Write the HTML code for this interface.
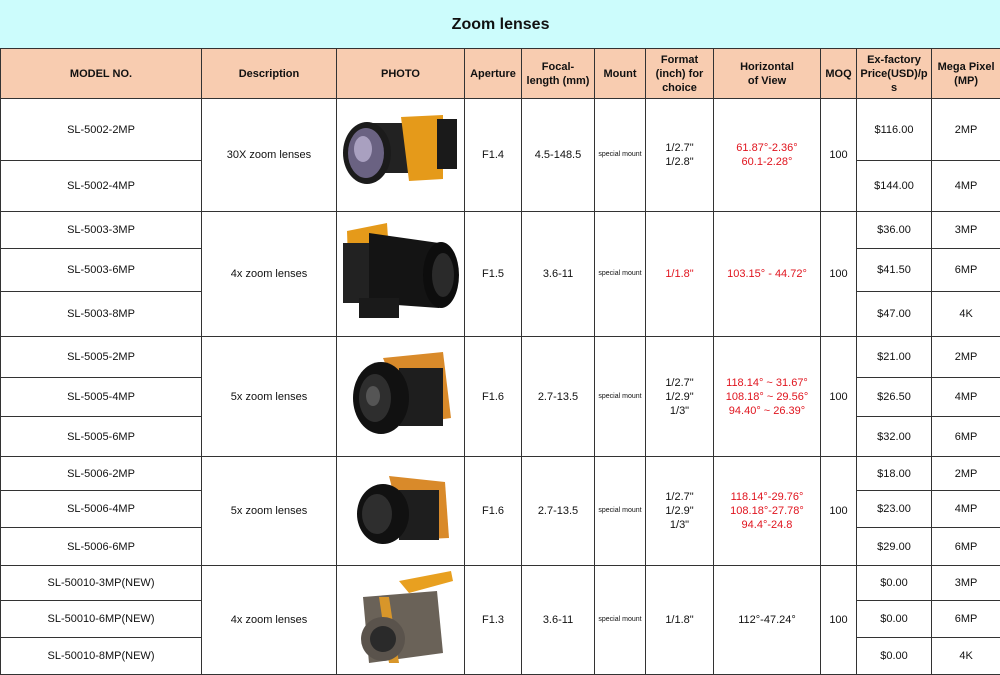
<!DOCTYPE html>
<html><head><meta charset="utf-8"><style>
body{margin:0;background:#fff;font-family:"Liberation Sans",Arial,sans-serif;}
table{border-collapse:collapse;table-layout:fixed;width:1000px;position:absolute;top:0;left:0}
td{border:1px solid #333;text-align:center;vertical-align:middle;font-size:11px;color:#111;padding:0;overflow:hidden;line-height:14px}
.t{background:#ccfcfc;font-weight:bold;font-size:16px;height:47px;border-top:1px solid #ccfcfc;border-left-color:#ccfcfc}
.h td{background:#f8ccb0;font-weight:bold;font-size:11px;height:49px}
.r{color:#e0141e}
.s{font-size:7px}
svg{display:block;margin:auto}
</style></head><body>
<table>
<colgroup><col style="width:201px"><col style="width:135px"><col style="width:128px"><col style="width:57px"><col style="width:73px"><col style="width:51px"><col style="width:68px"><col style="width:107px"><col style="width:36px"><col style="width:75px"><col style="width:69px"></colgroup>
<tr><td class="t" colspan="11">Zoom lenses</td></tr>
<tr class="h"><td>MODEL NO.</td><td>Description</td><td>PHOTO</td><td>Aperture</td><td>Focal-<br>length (mm)</td><td>Mount</td><td>Format<br>(inch) for<br>choice</td><td>Horizontal<br>of View</td><td>MOQ</td><td>Ex-factory<br>Price(USD)/p<br>s</td><td>Mega Pixel<br>(MP)</td></tr>

<tr style="height:62px"><td>SL-5002-2MP</td><td rowspan="2">30X zoom lenses</td><td rowspan="2"><svg width="124" height="100" viewBox="0 0 124 100"><rect x="30" y="18" width="60" height="50" fill="#222"/><path d="M62 12 L104 10 L104 74 L70 76 Z" fill="#e59a1a"/><rect x="98" y="14" width="20" height="50" fill="#1a1a1a"/><ellipse cx="28" cy="48" rx="24" ry="31" fill="#1b1b1b"/><ellipse cx="27" cy="48" rx="18" ry="25" fill="#6a6282"/><ellipse cx="24" cy="44" rx="9" ry="13" fill="#a9a0c0"/></svg></td><td rowspan="2">F1.4</td><td rowspan="2">4.5-148.5</td><td rowspan="2" class="s">special mount</td><td rowspan="2">1/2.7"<br>1/2.8"</td><td rowspan="2" class="r">61.87°-2.36°<br>60.1-2.28°</td><td rowspan="2">100</td><td>$116.00</td><td>2MP</td></tr>
<tr style="height:51px"><td>SL-5002-4MP</td><td>$144.00</td><td>4MP</td></tr>

<tr style="height:37px"><td>SL-5003-3MP</td><td rowspan="3">4x zoom lenses</td><td rowspan="3"><svg width="124" height="122" viewBox="0 0 124 122"><path d="M8 18 L48 10 L52 70 L10 80 Z" fill="#e59a1a"/><rect x="4" y="30" width="30" height="60" fill="#222"/><path d="M30 20 L100 30 L100 95 L30 90 Z" fill="#141414"/><ellipse cx="102" cy="62" rx="18" ry="33" fill="#0d0d0d"/><ellipse cx="104" cy="62" rx="11" ry="22" fill="#2a2a2a"/><rect x="20" y="85" width="40" height="20" fill="#1a1a1a"/></svg></td><td rowspan="3">F1.5</td><td rowspan="3">3.6-11</td><td rowspan="3" class="s">special mount</td><td rowspan="3" class="r">1/1.8"</td><td rowspan="3" class="r">103.15° - 44.72°</td><td rowspan="3">100</td><td>$36.00</td><td>3MP</td></tr>
<tr style="height:43px"><td>SL-5003-6MP</td><td>$41.50</td><td>6MP</td></tr>
<tr style="height:45px"><td>SL-5003-8MP</td><td>$47.00</td><td>4K</td></tr>

<tr style="height:41px"><td>SL-5005-2MP</td><td rowspan="3">5x zoom lenses</td><td rowspan="3"><svg width="124" height="118" viewBox="0 0 124 118"><path d="M44 20 L104 14 L112 80 L70 86 Z" fill="#d98a2a"/><rect x="60" y="30" width="44" height="58" fill="#1e1e1e"/><ellipse cx="42" cy="60" rx="28" ry="36" fill="#111"/><ellipse cx="36" cy="60" rx="16" ry="24" fill="#2e2e2e"/><ellipse cx="34" cy="58" rx="7" ry="10" fill="#555"/></svg></td><td rowspan="3">F1.6</td><td rowspan="3">2.7-13.5</td><td rowspan="3" class="s">special mount</td><td rowspan="3">1/2.7"<br>1/2.9"<br>1/3"</td><td rowspan="3" class="r">118.14° ~ 31.67°<br>108.18° ~ 29.56°<br>94.40° ~ 26.39°</td><td rowspan="3">100</td><td>$21.00</td><td>2MP</td></tr>
<tr style="height:39px"><td>SL-5005-4MP</td><td>$26.50</td><td>4MP</td></tr>
<tr style="height:40px"><td>SL-5005-6MP</td><td>$32.00</td><td>6MP</td></tr>

<tr style="height:34px"><td>SL-5006-2MP</td><td rowspan="3">5x zoom lenses</td><td rowspan="3"><svg width="124" height="106" viewBox="0 0 124 106"><path d="M50 18 L106 24 L110 80 L66 82 Z" fill="#d98a2a"/><rect x="60" y="32" width="40" height="50" fill="#1e1e1e"/><ellipse cx="44" cy="56" rx="26" ry="30" fill="#111"/><ellipse cx="38" cy="56" rx="15" ry="20" fill="#2e2e2e"/></svg></td><td rowspan="3">F1.6</td><td rowspan="3">2.7-13.5</td><td rowspan="3" class="s">special mount</td><td rowspan="3">1/2.7"<br>1/2.9"<br>1/3"</td><td rowspan="3" class="r">118.14°-29.76°<br>108.18°-27.78°<br>94.4°-24.8</td><td rowspan="3">100</td><td>$18.00</td><td>2MP</td></tr>
<tr style="height:37px"><td>SL-5006-4MP</td><td>$23.00</td><td>4MP</td></tr>
<tr style="height:38px"><td>SL-5006-6MP</td><td>$29.00</td><td>6MP</td></tr>

<tr style="height:35px"><td>SL-50010-3MP(NEW)</td><td rowspan="3">4x zoom lenses</td><td rowspan="3"><svg width="124" height="106" viewBox="0 0 124 106"><path d="M60 14 L112 4 L114 14 L70 26 Z" fill="#e8a020"/><path d="M24 30 L98 24 L104 86 L30 96 Z" fill="#6a6258"/><path d="M40 30 L50 96 L60 96 L50 30 Z" fill="#d8962a"/><ellipse cx="44" cy="72" rx="22" ry="22" fill="#5a534c"/><ellipse cx="44" cy="72" rx="13" ry="13" fill="#2a2a2a"/></svg></td><td rowspan="3">F1.3</td><td rowspan="3">3.6-11</td><td rowspan="3" class="s">special mount</td><td rowspan="3">1/1.8"</td><td rowspan="3">112°-47.24°</td><td rowspan="3">100</td><td>$0.00</td><td>3MP</td></tr>
<tr style="height:37px"><td>SL-50010-6MP(NEW)</td><td>$0.00</td><td>6MP</td></tr>
<tr style="height:37px"><td>SL-50010-8MP(NEW)</td><td>$0.00</td><td>4K</td></tr>
</table>
</body></html>
